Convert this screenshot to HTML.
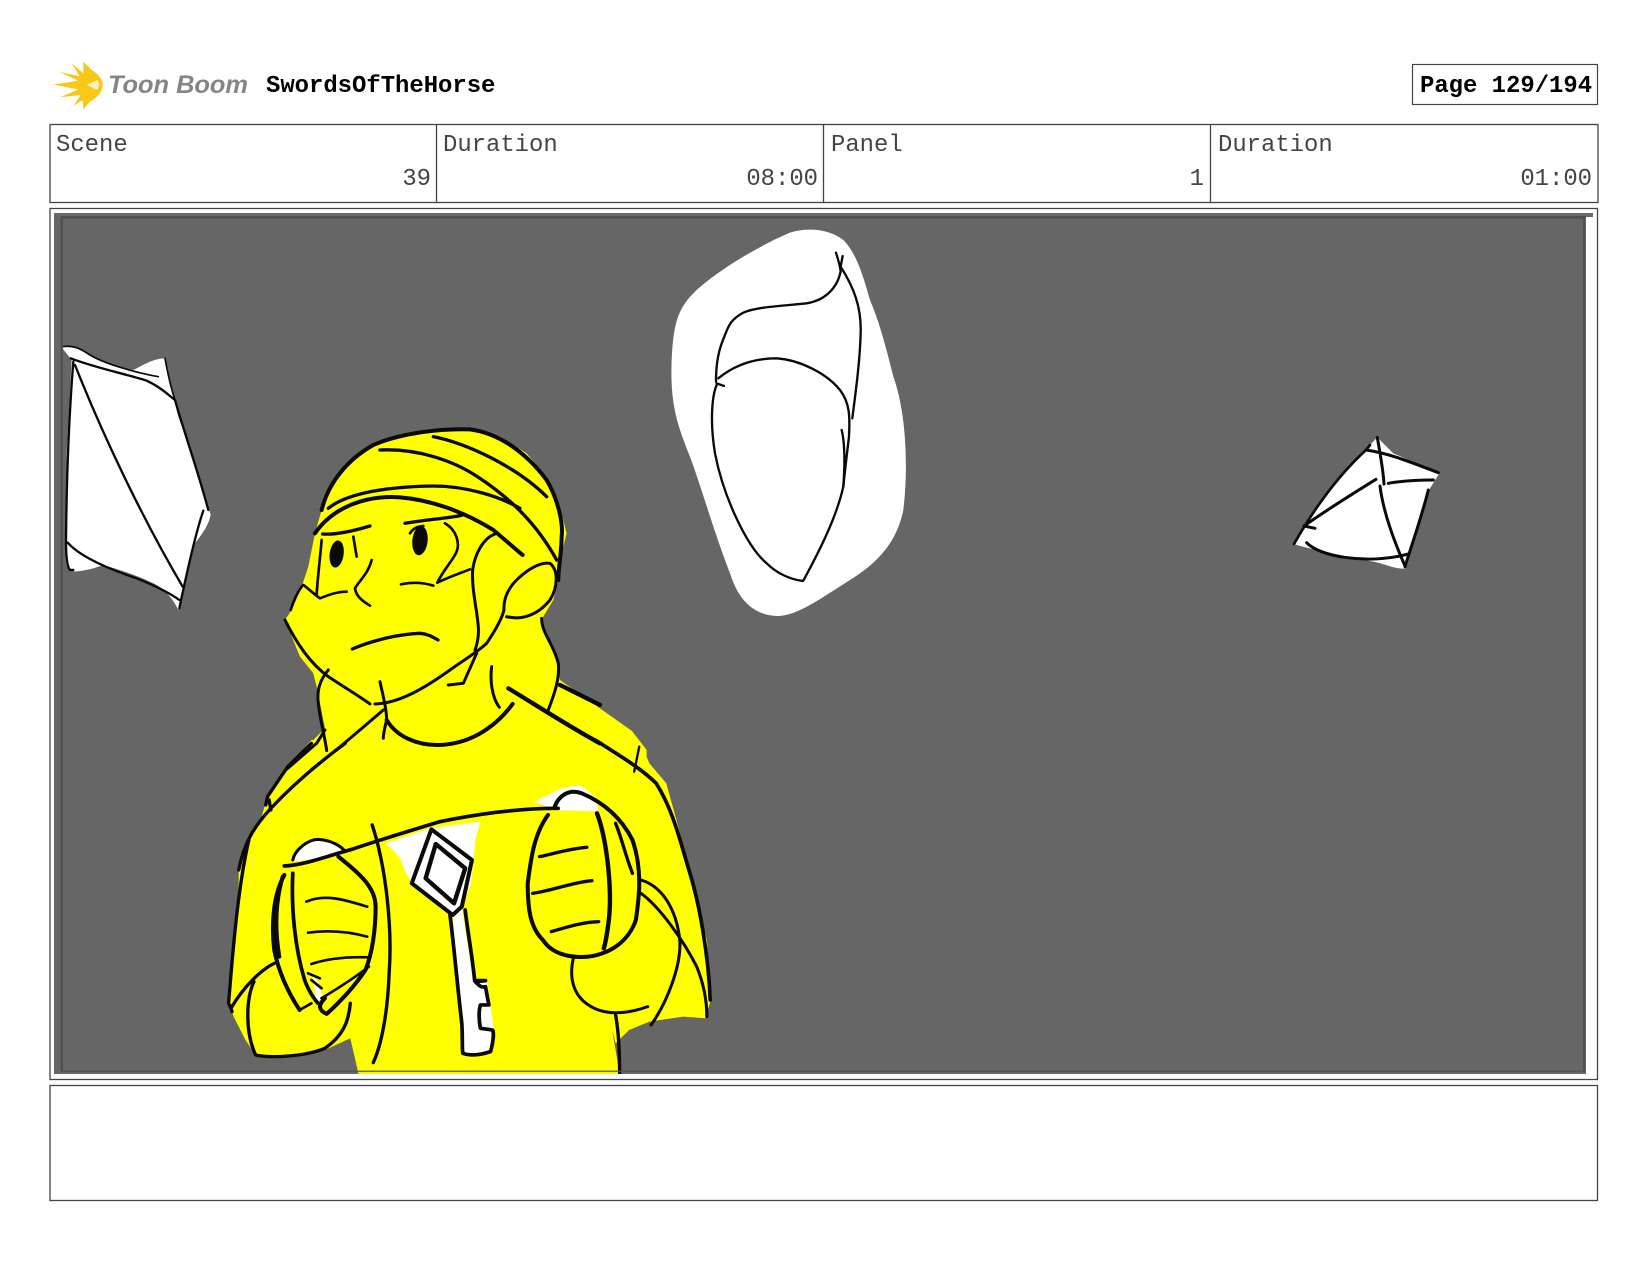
<!DOCTYPE html>
<html><head><meta charset="utf-8"><title>SwordsOfTheHorse</title>
<style>html,body{margin:0;padding:0;background:#fff;width:1650px;height:1275px;overflow:hidden}svg{display:block}
text{font-family:"Liberation Mono",monospace}
.l{font-size:23.9px;fill:#444}
.b{font-size:23.9px;font-weight:700;fill:#000}
.k{fill:none;stroke:#0a0a0a;stroke-linecap:round;stroke-linejoin:round}
</style></head><body>
<svg width="1650" height="1275" viewBox="0 0 1650 1275" xmlns="http://www.w3.org/2000/svg">
<defs><clipPath id="c"><rect x="54" y="213" width="1532" height="861"/></clipPath></defs>
<!-- logo -->
<g transform="translate(40 50) scale(.3333)">
<path d="M130 35L155 60C180 75 190 95 188 105C188 125 170 145 150 155L130 178L128 150L100 168L122 135L60 142L115 118L40 104L115 92L58 66L118 78L95 40L130 70Z" fill="#f8c818"/>
<path d="M140 105L172 90L178 105L172 120Z" fill="#fff2c0"/>
</g>
<text x="108" y="93" textLength="140" lengthAdjust="spacingAndGlyphs" style="font-family:'Liberation Sans',sans-serif;font-style:italic;font-weight:700;font-size:25px;fill:#858585">Toon Boom</text>
<text x="266" y="92" class="b">SwordsOfTheHorse</text>
<rect x="1412.5" y="64.5" width="185" height="40" fill="#fff" stroke="#444" stroke-width="1.2"/>
<text x="1420" y="92" class="b">Page 129/194</text>
<!-- table -->
<rect x="50" y="124.5" width="1548" height="78" fill="#fff" stroke="#444" stroke-width="1.3"/>
<path d="M436.5 124V203M823.5 124V203M1210.5 124V203" stroke="#444" stroke-width="1.3"/>
<text x="56" y="151" class="l">Scene</text>
<text x="443" y="151" class="l">Duration</text>
<text x="831" y="151" class="l">Panel</text>
<text x="1218" y="151" class="l">Duration</text>
<text x="431" y="185" class="l" text-anchor="end">39</text>
<text x="818" y="185" class="l" text-anchor="end">08:00</text>
<text x="1204" y="185" class="l" text-anchor="end">1</text>
<text x="1592" y="185" class="l" text-anchor="end">01:00</text>
<!-- image box -->
<rect x="50" y="208.5" width="1547.5" height="871" fill="#fff" stroke="#444" stroke-width="1.3"/>
<rect x="50" y="1085.5" width="1547.5" height="115" fill="#fff" stroke="#444" stroke-width="1.3"/>
<rect x="54" y="213" width="1532" height="861" fill="#666"/>
<rect x="1586" y="213" width="7" height="4" fill="#666"/>
<g clip-path="url(#c)">
<!-- yellow -->
<g transform="translate(200 410) scale(.3333)">
<path fill="#ff0" d="M255 630L275 600L305 530L325 470L345 370L365 300L375 260L430 170L520 100L640 65L800 55L900 80L980 130L1040 200L1080 290L1100 370L1085 430L1075 510L1060 570L1030 620L1025 650L1070 740L1080 810L1296 963L1340 1020L1340 1080H255L350 980L375 955L350 830L340 790L300 740Z"/>
</g>
<g transform="translate(210 740) scale(.338 .3333)">
<path fill="#ff0" d="M300 0L230 80L170 170L150 240L115 300L85 390L85 430L70 600L55 780L70 830L105 900L135 945L250 950L340 930L415 895L430 960L440 1005H1210L1205 960L1190 870L1200 910L1240 870L1300 845L1400 830L1465 835L1485 770L1470 600L1440 470L1380 240L1350 130L1300 70L1275 10L1260 0Z"/>
<path fill="#fff" d="M960 185L1040 145L1095 135L1140 170L1150 215L1020 210Z"/>
<path fill="#fff" d="M520 310L650 265L800 245L785 300L780 360L770 440L745 500L760 600L780 720L820 730L840 870L830 940L750 945L720 600L720 520L640 470L600 430L580 400L560 350Z"/>
<path fill="#fff" d="M248 365L255 335L290 305L320 298L360 305L395 330L340 352Z"/>
<path fill="#fff" d="M300 690L325 740L335 775L315 785Z"/>
<path class="k" stroke-width="10" d="M300 10L230 80L170 170L165 195M175 180L180 210"/>
<path class="k" stroke-width="10" d="M400 10C320 70 240 140 180 205C130 260 100 310 85 390"/>
<path class="k" stroke-width="10" d="M115 300C85 430 70 600 55 790C60 800 65 810 65 815"/>
<path class="k" stroke-width="11" d="M1140 0C1200 40 1270 80 1320 130C1370 210 1390 300 1420 400C1450 500 1475 650 1480 780"/>
<path class="k" stroke-width="7" d="M1270 20L1255 95"/>
<path class="k" stroke-width="11" d="M220 378C280 375 340 350 420 328C500 300 600 270 680 245C780 225 900 205 1030 205"/>
<path class="k" stroke-width="9" d="M245 360C250 330 290 298 320 298C360 300 390 320 400 335"/>
<path class="k" stroke-width="12" d="M220 405C190 460 180 540 190 630C200 680 220 740 265 810M215 410C195 480 190 560 205 650"/>
<path class="k" stroke-width="11" d="M245 400C240 500 250 620 280 720C290 750 310 780 320 790"/>
<path class="k" stroke-width="12" d="M380 350C440 400 490 440 490 500C490 570 480 640 460 690C420 750 380 790 345 822C320 810 320 795 340 775"/>
<path class="k" stroke-width="8" d="M285 485C340 460 400 480 465 500M290 578C350 570 410 575 465 590M300 672C350 655 410 650 470 652M330 775C370 750 420 720 470 680M290 700L325 715M300 720L330 745M265 810L300 790"/>
<path class="k" stroke-width="10" d="M190 670C150 690 100 740 65 800M130 725C105 780 105 880 135 945C180 955 280 950 340 925C390 890 410 850 415 790"/>
<path class="k" stroke-width="10" d="M480 255C520 380 540 560 530 700C525 830 505 920 483 968"/>
<path class="k" stroke-width="12" d="M655 268L775 360L745 500L718 525L597 430Z"/>
<path class="k" stroke-width="13" d="M668 312L755 385L722 490L638 415Z"/>
<path class="k" stroke-width="11" d="M710 525C720 600 730 720 745 850C748 900 745 920 748 940C770 948 800 945 830 935C840 900 840 870 835 870L800 865C795 840 795 810 800 795L825 795L815 740C800 745 790 730 785 725L815 722L783 722C775 640 760 560 755 510"/>
<path class="k" stroke-width="12" d="M1000 225C960 280 950 350 940 430C940 500 945 560 985 600C1010 640 1060 655 1120 650C1190 640 1240 600 1260 540C1270 470 1280 390 1250 300C1220 240 1170 190 1100 160C1060 145 1030 170 1020 200"/>
<path class="k" stroke-width="13" d="M1145 220C1175 300 1190 450 1180 540C1175 580 1170 610 1165 625"/>
<path class="k" stroke-width="10" d="M975 350C1020 340 1070 325 1115 322M955 460C1020 450 1080 425 1130 422M1010 575C1060 560 1110 545 1150 545M1200 250C1220 300 1230 350 1250 400"/>
<path class="k" stroke-width="9" d="M1075 655C1060 720 1080 770 1120 795C1170 830 1240 820 1295 800"/>
<path class="k" stroke-width="10" d="M1200 825C1210 880 1212 950 1212 1005"/>
<path class="k" stroke-width="9" d="M1275 420C1340 440 1380 510 1390 600C1395 680 1350 790 1305 855M1275 460C1330 500 1400 600 1440 680C1460 730 1470 780 1470 830"/>
</g>
<g transform="translate(200 410) scale(.3333)">
<path class="k" stroke-width="12" d="M365 300C385 220 440 150 520 105C600 70 720 55 810 58C900 70 980 130 1040 210C1075 270 1090 340 1085 380C1085 430 1075 470 1075 510"/>
<path class="k" stroke-width="10" d="M700 80C800 100 950 170 1040 260M540 120C650 115 760 150 840 205C930 265 1010 340 1070 450M385 295C440 250 560 230 700 228C800 228 900 260 960 295"/>
<path class="k" stroke-width="12" d="M345 370C400 290 500 255 600 262C700 270 800 310 880 360C910 385 950 420 968 435"/>
<path class="k" stroke-width="10" d="M368 372C410 375 470 360 510 348M615 340C670 330 740 325 785 316"/>
<ellipse cx="410" cy="432" rx="21" ry="41" fill="#0a0a0a" transform="rotate(8 410 432)"/>
<ellipse cx="660" cy="392" rx="23" ry="44" fill="#0a0a0a" transform="rotate(6 660 392)"/>
<path class="k" stroke-width="8" d="M460 380L470 440M365 390C360 450 352 510 350 555M310 525C330 540 345 555 360 565C385 555 410 545 440 545M305 530C290 550 280 575 272 600M515 450C505 490 480 510 465 535C468 560 490 575 510 587M630 370C640 355 650 350 670 348M735 340C770 360 780 400 770 425C760 450 730 480 712 518C750 500 780 490 810 478M603 523C640 515 670 518 700 527"/>
<path class="k" stroke-width="10" d="M457 717C520 690 600 672 660 670C685 672 700 682 714 690"/>
<path class="k" stroke-width="9" d="M255 630C290 700 330 760 385 800C430 830 480 860 510 882M885 372C850 385 825 430 818 480C815 540 830 590 835 650C838 690 825 720 825 720M525 882C600 880 680 830 750 780C800 745 840 720 860 700C880 670 905 630 912 600C910 560 930 530 950 510C980 480 1020 455 1050 460C1075 480 1075 530 1050 570C1010 620 960 630 920 620"/>
<path class="k" stroke-width="9" d="M540 815C550 860 560 900 560 930C555 950 550 970 550 985M875 770C870 810 875 860 898 892M745 825L790 820L830 730"/>
<path class="k" stroke-width="12" d="M560 930C590 980 650 1005 710 1005C800 1005 880 960 938 882"/>
<path class="k" stroke-width="13" d="M925 835C1000 880 1100 945 1200 1000M1080 825L1200 885"/>
<path class="k" stroke-width="9" d="M1025 625C1025 670 1060 700 1075 760C1080 810 1060 860 1045 900M385 780C360 810 350 840 355 880C360 930 375 980 380 1022M260 1078L350 1000L375 960M335 1078C400 1030 480 960 550 900"/>
</g>
<!-- pillow -->
<g transform="translate(40 320) scale(.3333)">
<path fill="#fff" d="M65 82C90 75 120 80 150 105C190 130 240 145 280 150C310 135 340 115 375 115C385 170 400 230 415 290C450 380 490 500 512 585C505 620 480 650 465 670C450 730 430 810 415 870C400 840 380 810 340 790C280 760 220 745 190 735C150 750 100 760 90 750C75 745 75 700 78 660L80 400L95 120Z"/>
<path class="k" stroke-width="5" d="M68 80C100 75 120 85 150 105C200 135 300 160 355 170M375 115C385 170 395 210 405 240"/>
<path class="k" stroke-width="7" d="M92 115C170 145 270 165 320 182C360 200 385 225 405 240C430 330 470 440 505 570M100 125C90 250 80 450 78 660C78 700 80 740 90 750L100 750M105 135C190 350 310 600 428 800M83 668C120 710 200 745 290 775C340 795 390 820 418 840M490 572C470 630 440 760 418 865"/>
</g>
<!-- middle -->
<g transform="translate(650 210) scale(.3333)">
<path fill="#fff" d="M420 68C480 50 540 60 580 90C620 130 640 200 660 270C690 340 710 420 730 500C770 610 775 780 760 900C740 1000 680 1060 600 1110C520 1160 440 1220 380 1218C310 1215 265 1170 240 1090C190 960 160 850 120 740C80 640 60 580 65 450C70 350 80 300 130 250C190 190 320 110 420 68Z"/>
<path class="k" stroke-width="7" d="M558 128C565 150 570 165 572 185C560 240 520 272 470 280C400 288 320 290 280 308C240 330 235 350 225 375C205 420 198 460 198 515M578 138L572 170C610 230 635 290 632 370C630 450 618 540 607 625"/>
<path class="k" stroke-width="7" d="M205 505C260 460 320 445 380 445C450 450 530 490 570 540C600 580 600 620 597 680C590 740 585 780 580 830C560 920 510 1020 460 1112"/>
<path class="k" stroke-width="7" d="M200 525C185 560 180 640 195 730C220 860 290 1010 350 1060C380 1090 420 1108 458 1113M575 660C585 700 585 760 580 830M200 520L222 528"/>
</g>
<!-- right -->
<g transform="translate(1270 420) scale(.3333)">
<path fill="#fff" d="M322 52C340 70 360 90 370 100L508 160L480 205C460 280 430 370 415 405L405 445C380 450 340 430 310 425C230 410 150 395 70 372C100 320 170 210 290 85Z"/>
<path class="k" stroke-width="8" d="M300 75L290 88C200 170 130 270 72 372"/>
<path class="k" stroke-width="9" d="M288 90C360 100 430 130 505 158M322 52C330 100 340 150 342 192M355 190C400 182 450 180 490 180M330 198C340 280 375 370 405 438M475 210C455 290 430 360 405 440M318 178C250 220 170 270 102 318L135 325M110 368C150 410 280 430 390 408L415 402"/>
</g>
</g>
<!-- frame lines -->
<rect x="54" y="213" width="1539" height="3.5" fill="#6a6a6a"/>
<rect x="61" y="216" width="1525" height="2.5" fill="#4f4f4f"/>
<rect x="60.5" y="217" width="2.5" height="854" fill="#505050"/>
<rect x="1583" y="217" width="2" height="854" fill="#505050"/>
<rect x="61" y="1070.5" width="1524" height="1.6" fill="#505050" opacity=".8"/>
</svg>
</body></html>
